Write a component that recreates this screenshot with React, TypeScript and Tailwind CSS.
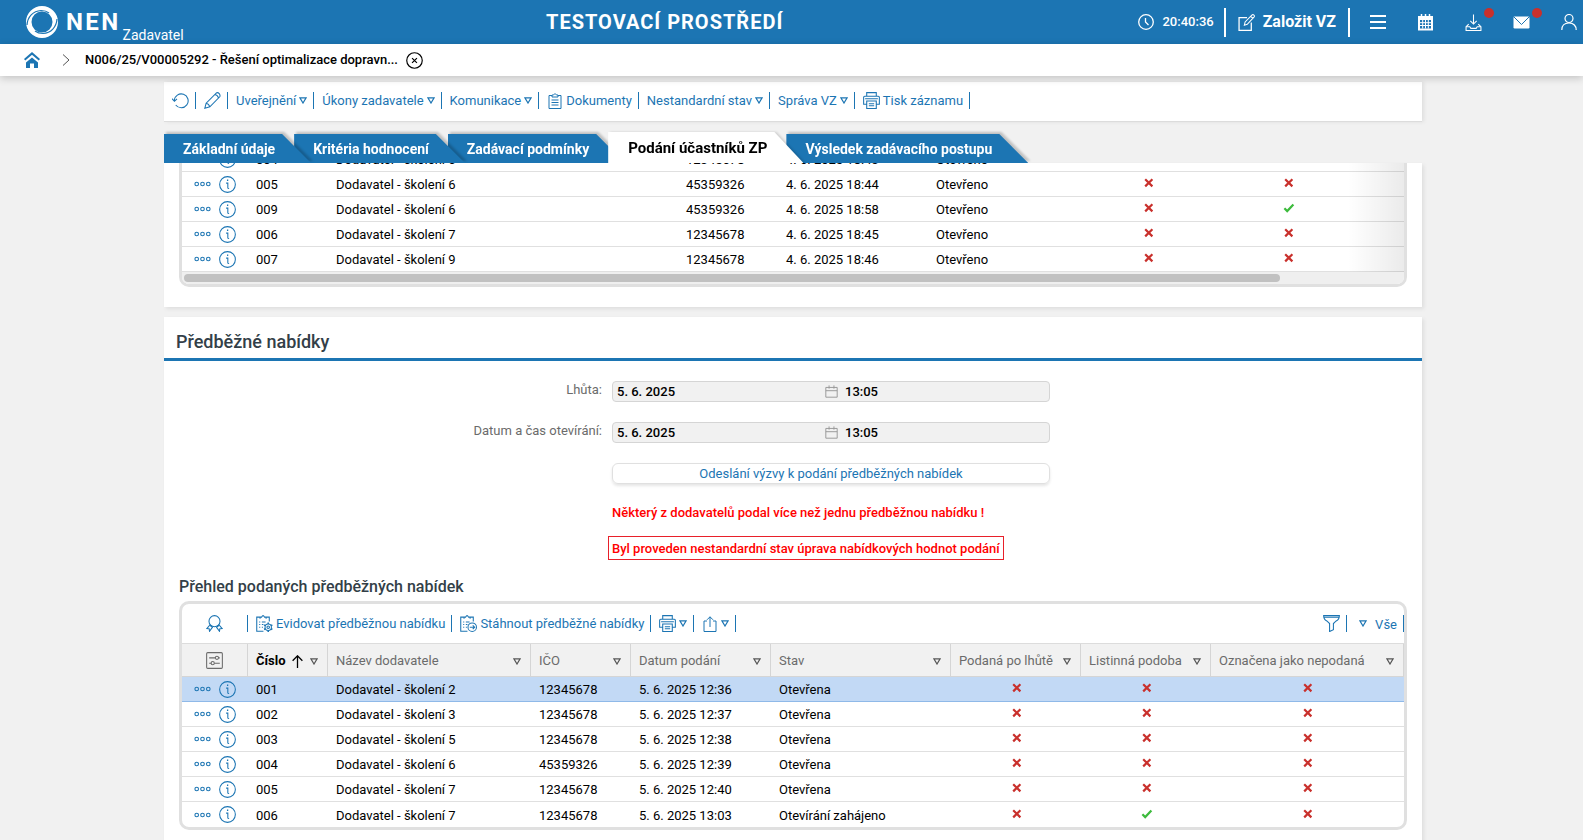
import { useState, type ReactNode } from "react";

interface IconProps {
  className?: string;
}

interface Submission {
  id: string;
  supplier: string;
  ico: string;
  date: string;
  state: string;
  flags: boolean[];
}

const tabs = [
  "Základní údaje",
  "Kritéria hodnocení",
  "Zadávací podmínky",
  "Podání účastníků ZP",
  "Výsledek zadávacího postupu",
];

const tabLayers = ["z-50", "z-40", "z-30", "z-20", "z-10"];

const requests: Submission[] = [
  { id: "004", supplier: "Dodavatel - školení 6", ico: "12345678", date: "4. 6. 2025 18:43", state: "Otevřeno", flags: [false, false] },
  { id: "005", supplier: "Dodavatel - školení 6", ico: "45359326", date: "4. 6. 2025 18:44", state: "Otevřeno", flags: [false, false] },
  { id: "009", supplier: "Dodavatel - školení 6", ico: "45359326", date: "4. 6. 2025 18:58", state: "Otevřeno", flags: [false, true] },
  { id: "006", supplier: "Dodavatel - školení 7", ico: "12345678", date: "4. 6. 2025 18:45", state: "Otevřeno", flags: [false, false] },
  { id: "007", supplier: "Dodavatel - školení 9", ico: "12345678", date: "4. 6. 2025 18:46", state: "Otevřeno", flags: [false, false] },
];

const offers: Submission[] = [
  { id: "001", supplier: "Dodavatel - školení 2", ico: "12345678", date: "5. 6. 2025 12:36", state: "Otevřena", flags: [false, false, false] },
  { id: "002", supplier: "Dodavatel - školení 3", ico: "12345678", date: "5. 6. 2025 12:37", state: "Otevřena", flags: [false, false, false] },
  { id: "003", supplier: "Dodavatel - školení 5", ico: "12345678", date: "5. 6. 2025 12:38", state: "Otevřena", flags: [false, false, false] },
  { id: "004", supplier: "Dodavatel - školení 6", ico: "45359326", date: "5. 6. 2025 12:39", state: "Otevřena", flags: [false, false, false] },
  { id: "005", supplier: "Dodavatel - školení 7", ico: "12345678", date: "5. 6. 2025 12:40", state: "Otevřena", flags: [false, false, false] },
  { id: "006", supplier: "Dodavatel - školení 7", ico: "12345678", date: "5. 6. 2025 13:03", state: "Otevírání zahájeno", flags: [false, true, false] },
];

const offerColumns = [
  "Název dodavatele",
  "IČO",
  "Datum podání",
  "Stav",
  "Podaná po lhůtě",
  "Listinná podoba",
  "Označena jako nepodaná",
];

/* ---------- icons ---------- */

function Svg({ className = "size-4", children }: { className?: string; children: ReactNode }) {
  return (
    <svg viewBox="0 0 16 16" fill="none" stroke="currentColor" strokeWidth="1" className={`shrink-0 ${className}`} aria-hidden="true">
      {children}
    </svg>
  );
}

function Arrow({ className = "" }: IconProps) {
  return (
    <svg viewBox="0 0 8 7" className={`h-[7px] w-2 shrink-0 ${className}`} fill="none" stroke="currentColor" strokeWidth="1.2" aria-hidden="true">
      <path d="M0.9 0.8h6.2L4 6z" />
    </svg>
  );
}

function Cross() {
  return (
    <svg viewBox="0 0 10 10" className="mx-auto size-[10px]" fill="none" stroke="#c9302c" strokeWidth="2.2" role="img" aria-label="Ne">
      <path d="M1.2 1.2l7.2 7.2M8.4 1.2L1.2 8.4" />
    </svg>
  );
}

function Check() {
  return (
    <svg viewBox="0 0 12 10" className="mx-auto h-[10px] w-3" fill="none" stroke="#3dbb3d" strokeWidth="2.2" role="img" aria-label="Ano">
      <path d="M1.4 5.2l2.8 2.9L10.4 1.6" />
    </svg>
  );
}

function LogoIcon() {
  return (
    <svg viewBox="0 0 32 32" className="size-8 shrink-0" aria-hidden="true">
      <path
        fill="#fff"
        fillRule="evenodd"
        d="M16 0a16 16 0 1 1 0 32 16 16 0 0 1 0-32zm0 5.500a10.500 10.500 0 1 0 0 21 10.500 10.500 0 0 0 0-21z"
      />
      <path
        d="M1 19C1.500 11 7 5 15 4.500q5 0 8 2.500M31 13c-.5 8-6 14-14 14.500q-5 0-8-2.500"
        fill="none"
        stroke="#1c75b3"
        strokeWidth="1.200"
      />
    </svg>
  );
}

const ClockIcon = () => (
  <Svg>
    <circle cx="8" cy="8" r="7.3" strokeWidth="1.300" />
    <path d="M7.500 4v4l3 3" strokeWidth="1.300" />
  </Svg>
);

const EditIcon = () => (
  <Svg className="size-[17px]">
    <path d="M8.500 3.500H1v12h11.500V8" strokeWidth="1.200" />
    <path d="M6 10.500l.7-3L13 1q1-.8 2 0t0 2L8.700 9.700zM12 2.200l2 2" />
  </Svg>
);

const CalendarSolidIcon = () => (
  <svg viewBox="0 0 17 17" className="size-[17px]" aria-hidden="true">
    <path d="M1 2h15v14.500H1z" fill="#fff" />
    <path d="M4.500 0v3.500M8.500 0v3.500M12.500 0v3.500" stroke="#fff" strokeWidth="1.500" />
    <path d="M3 6h11v8.500H3z" fill="#1c75b3" />
    <path d="M3 8.700h11M3 11.500h11M5.700 6v8.500M8.500 6v8.500M11.300 6v8.500" stroke="#fff" strokeWidth="1" />
  </svg>
);

const InboxIcon = () => (
  <Svg className="size-[17px]">
    <path d="M8 .5v9M5 6.500l3 3 3-3" />
    <path d="M3.500 9.500L1 12v3.500h14V12l-2.500-2.500" />
    <path d="M1 12h3.500l1 1.500h5l1-1.500H15" />
  </Svg>
);

const MailIcon = () => (
  <svg viewBox="0 0 17 13" className="h-[13px] w-[17px]" aria-hidden="true">
    <rect x=".5" y=".5" width="16" height="12" rx="1.200" fill="#fff" />
    <path d="M1 1l7.500 7.500L16 1" fill="none" stroke="#1c75b3" strokeWidth="1" />
  </svg>
);

const UserIcon = () => (
  <Svg>
    <circle cx="8" cy="4.500" r="4" strokeWidth="1.200" />
    <path d="M.8 16c0-4 2.500-7 7.200-7s7.200 3 7.200 7" strokeWidth="1.200" />
  </Svg>
);

const HomeIcon = () => (
  <svg viewBox="0 0 16 16" className="size-4" aria-hidden="true">
    <path d="M8 5.500l6 5V16h-4v-4.500H6V16H2v-5.500z" fill="#1c75b3" />
    <path d="M.6 7.800L8 1.400l7.400 6.400" fill="none" stroke="#1c75b3" strokeWidth="2" />
  </svg>
);

const RefreshIcon = () => (
  <Svg className="size-[17px]">
    <path d="M2.200 8a6.500 6.500 0 1 1 1.300 4.200M0 6.300l2.300 2.500 2.400-2.300" />
  </Svg>
);

const PencilIcon = () => (
  <Svg className="size-[17px]">
    <path d="M.8 15.200l1.200-4.700L11.500 1q1.500-1 2.800.6t.5 2.900L5.500 14zM2 10.500q2.500.5 3.500 3.500M10.300 2.300q2.500.4 3.300 3.300" />
  </Svg>
);

const ClipboardIcon = () => (
  <Svg>
    <path d="M5 2.500H2v13h12v-13h-3M5 4V2h1.500q1.500-3 3 0H11v2zM4.500 7h7M4.500 9.500h7M4.500 12h7" />
  </Svg>
);

// clipboard with a badge in the corner, used by the table actions
function ClipboardBadgeIcon({ kind }: { kind: "gear" | "arrow" }) {
  return (
    <Svg className="size-[17px]">
      <path d="M4 2H.7v13.300H7M9.500 2h3v4M3.800 3.500V2h1.500q1.300-2.800 2.700 0h1.500v1.500M3 6.500h1M5.500 6.500H9M3 9h1M5.500 9H7M3 11.500h1M5.500 11.500h1" />
      {kind === "gear" ? (
        <>
          <circle cx="11.500" cy="11.500" r="1.200" />
          <circle cx="11.500" cy="11.500" r="3" />
          <path d="M11.500 7v1.500M11.500 14.500V16M7.600 9.300l1.300.7M14.100 13l1.300.7M7.600 13.700l1.300-.7M14.100 10l1.300-.7" strokeWidth="1.500" />
        </>
      ) : (
        <>
          <circle cx="11.500" cy="11.500" r="4" />
          <path d="M9.200 11.500h4.500M12 9.700l1.800 1.800-1.800 1.800" />
        </>
      )}
    </Svg>
  );
}

const PrinterIcon = () => (
  <Svg className="size-[17px]">
    <path d="M3.500 4V.6h9V4M3.500 11.500H.6V5q0-1 1-1h12.800q1 0 1 1v6.500h-2.900M3.500 8.500h9v7h-9zM2 6.300h12M5.500 11h5M5.500 13h5" />
  </Svg>
);

const ShareIcon = () => (
  <Svg>
    <path d="M5 5H2v10.500h12V5h-3M8 11V.8M5 3.800l3-3 3 3" />
  </Svg>
);

const FunnelIcon = () => (
  <Svg className="size-[17px]">
    <path d="M.6.600h14.800q0 3.400-3 5L9.800 8v5.800L6.200 15.600V8L3.600 5.600q-3-1.600-3-5zM1 2.200h14" />
  </Svg>
);

const RibbonIcon = () => (
  <Svg className="size-[17px]">
    <circle cx="8" cy="5.800" r="5.200" />
    <path d="M3.800 9.200L.8 12.800l2.200.2.300 2.300L6 11.600q-1.500-.8-2.200-2.400M12.200 9.200l3 3.600-2.200.2-.3 2.300L10 11.600q1.500-.8 2.200-2.400" />
  </Svg>
);

const SettingsIcon = () => (
  <Svg className="size-[17px]">
    <rect x=".6" y=".6" width="14.800" height="14.800" rx="1" />
    <path d="M3 5.500h5.700M3 10.500h2M7.700 10.500H13" />
    <circle cx="10.300" cy="5.500" r="1.500" />
    <circle cx="6.300" cy="10.500" r="1.500" />
    <path d="M11.800 5.500H13" />
  </Svg>
);

const SmallCalendarIcon = () => (
  <Svg className="size-[13px] text-[#999]">
    <path d="M1 3h14v12H1zM1 7h14M5 .5v4M11 .5v4" strokeWidth="1.200" />
  </Svg>
);

const DotsIcon = () => (
  <svg viewBox="0 0 17 6" className="h-[6px] w-[17px]" fill="none" stroke="currentColor" strokeWidth="1.100" aria-hidden="true">
    <circle cx="2.700" cy="3" r="1.800" />
    <circle cx="8.500" cy="3" r="1.800" />
    <circle cx="14.300" cy="3" r="1.800" />
  </svg>
);

const InfoIcon = () => (
  <Svg className="size-[17px]">
    <circle cx="8" cy="8" r="7.400" />
    <path d="M6.700 6.700h1.600v4.500q0 .5 1.200.5" />
    <path d="M7.500 4h1.200" strokeWidth="1.300" />
  </Svg>
);

const CloseIcon = () => (
  <Svg className="size-[17px]">
    <circle cx="8" cy="8" r="7.300" strokeWidth="1.100" />
    <path d="M5.700 5.700l4.600 4.600M10.300 5.700l-4.600 4.600" strokeWidth="1.100" />
  </Svg>
);

/* ---------- parts ---------- */

interface ToolButtonProps {
  label?: string;
  title?: string;
  icon?: ReactNode;
  menu?: boolean;
}

function ToolButton({ label, title, icon, menu }: ToolButtonProps) {
  return (
    <button
      type="button"
      aria-label={label ?? title}
      className="flex h-[17px] items-center gap-[3px] border-r border-[#1c75b3] pr-[6px] pl-2 text-[#1c75b3]"
    >
      {icon}
      {label && <span>{label}</span>}
      {menu && <Arrow />}
    </button>
  );
}

function RowActions() {
  return (
    <td>
      <div className="flex items-center gap-2 pl-3 text-[#1c75b3]">
        <button type="button" aria-label="Akce">
          <DotsIcon />
        </button>
        <button type="button" aria-label="Detail">
          <InfoIcon />
        </button>
      </div>
    </td>
  );
}

function RowCells({ row }: { row: Submission }) {
  return (
    <>
      <RowActions />
      <td className="pt-0.5 pl-2">{row.id}</td>
      <td className="pt-0.5 pl-2">{row.supplier}</td>
      <td className="pt-0.5 pl-2">{row.ico}</td>
      <td className="pt-0.5 pl-2">{row.date}</td>
      <td className="pt-0.5 pl-2">{row.state}</td>
    </>
  );
}

function FlagCell({ value }: { value: boolean }) {
  return <td className="pb-0.5 pl-px">{value ? <Check /> : <Cross />}</td>;
}

function DateField({ id, label, date, time }: { id: string; label: string; date: string; time: string }) {
  return (
    <div className="flex items-center">
      <label htmlFor={id} className="w-[438px] pr-[10px] pb-1 text-right text-[#6b6b6b]">
        {label}
      </label>
      <div className="flex h-[21px] w-[438px] items-center rounded border border-[#d5d5d5] bg-[#f1f1f1] font-medium">
        <input id={id} readOnly defaultValue={date} className="w-[212px] pl-1 outline-none" />
        <SmallCalendarIcon />
        <input aria-label={`${label} čas`} readOnly defaultValue={time} className="w-[150px] pl-[7px] outline-none" />
      </div>
    </div>
  );
}

export default function App() {
  const [activeTab, setActiveTab] = useState(3);
  const [selected, setSelected] = useState("001");

  return (
    <div className="flex h-screen flex-col overflow-hidden bg-[#f1f1f1] font-['Roboto',sans-serif] text-[13px] leading-4 text-black">
      <header className="flex h-11 shrink-0 items-center bg-[#1c75b3] pr-[6px] pl-[26px] text-white">
        <a href="#" className="flex w-1/3 items-center self-stretch">
          <LogoIcon />
          <span className="pl-2 text-2xl font-bold tracking-widest">NEN</span>
          <span className="self-end pl-0.5 text-sm leading-[18px]">Zadavatel</span>
        </a>
        <h1 className="pl-[3px] text-xl font-bold tracking-wider">TESTOVACÍ PROSTŘEDÍ</h1>
        <div className="flex flex-1 items-center justify-end">
          <ClockIcon />
          <time className="pr-[10px] pl-2 font-medium">20:40:36</time>
          <button type="button" className="flex h-[29px] items-center gap-2 border-x-2 border-white px-3 text-base font-bold">
            <EditIcon />
            Založit VZ
          </button>
          <nav className="flex items-center gap-[31px] pl-5">
            <button type="button" aria-label="Menu">
              <svg viewBox="0 0 16 14" className="h-[14px] w-4" stroke="#fff" strokeWidth="2" aria-hidden="true">
                <path d="M0 1h16M0 7h16M0 13h16" />
              </svg>
            </button>
            <button type="button" aria-label="Kalendář">
              <CalendarSolidIcon />
            </button>
            <button type="button" aria-label="Stažené" className="relative">
              <InboxIcon />
              <span className="absolute -top-[6px] -right-3 size-[10px] rounded-full bg-[#c9302c]" />
            </button>
            <button type="button" aria-label="Zprávy" className="relative">
              <MailIcon />
              <span className="absolute -top-2 -right-3 size-[10px] rounded-full bg-[#c9302c]" />
            </button>
            <button type="button" aria-label="Uživatel">
              <UserIcon />
            </button>
          </nav>
        </div>
      </header>

      <nav className="z-10 flex h-8 shrink-0 items-center bg-white pl-6 shadow-[0_2px_8px_rgba(0,0,0,0.2)]">
        <a href="#" aria-label="Domů">
          <HomeIcon />
        </a>
        <svg viewBox="0 0 8 12" className="ml-[22px] h-3 w-2" fill="none" stroke="#555" aria-hidden="true">
          <path d="M1 .5l6 5.500-6 5.500" />
        </svg>
        <a href="#" className="pl-[15px] font-medium">
          N006/25/V00005292 - Řešení optimalizace dopravn...
        </a>
        <button type="button" aria-label="Zavřít" className="pl-2">
          <CloseIcon />
        </button>
      </nav>

      <main className="pt-[6px] pl-[3px]">
        <div className="mx-auto max-w-[1258px]">
          <div className="flex h-10 items-center border-b border-[#dcdcdc] bg-white pb-[2px] shadow-[2px_0_4px_rgba(0,0,0,0.08)]">
            <ToolButton title="Obnovit" icon={<RefreshIcon />} />
            <ToolButton title="Upravit" icon={<PencilIcon />} />
            <ToolButton label="Uveřejnění" menu />
            <ToolButton label="Úkony zadavatele" menu />
            <ToolButton label="Komunikace" menu />
            <ToolButton label="Dokumenty" icon={<ClipboardIcon />} />
            <ToolButton label="Nestandardní stav" menu />
            <ToolButton label="Správa VZ" menu />
            <ToolButton label="Tisk záznamu" icon={<PrinterIcon />} />
          </div>

          <ul className="flex h-[41px] items-end overflow-hidden text-sm font-bold">
            {tabs.map((tab, index) => (
              <li
                key={tab}
                className={`relative ${
                  activeTab === index
                    ? "z-60 drop-shadow-[2px_0_1px_rgba(0,0,0,0.15)]"
                    : `drop-shadow-[2px_-2px_1px_rgba(0,0,0,0.2)] ${tabLayers[index]}`
                }`}
              >
                <button
                  type="button"
                  onClick={() => setActiveTab(index)}
                  className={`-mr-[17px] block pr-9 whitespace-nowrap [clip-path:polygon(0_0,calc(100%_-_29px)_0,100%_100%,0_100%)] ${
                    activeTab === index ? "h-[31px] bg-white pt-0.5 pl-5 text-[15px] text-black" : "h-[29px] bg-[#1c75b3] pt-px pl-[19px] text-white"
                  }`}
                >
                  {tab}
                </button>
              </li>
            ))}
          </ul>

          <section className="h-36 overflow-hidden bg-white px-[15px] shadow-[2px_2px_4px_rgba(0,0,0,0.08)]">
            <div className="relative -mt-[19px] overflow-hidden rounded-[10px] border-[3px] border-[#e0e0e0]">
              <table className="w-full table-fixed border-separate border-spacing-0">
                <colgroup>
                  <col className="w-[66px]" />
                  <col className="w-20" />
                  <col className="w-[350px]" />
                  <col className="w-[100px]" />
                  <col className="w-[150px]" />
                  <col className="w-[150px]" />
                  <col className="w-[140px]" />
                  <col className="w-[140px]" />
                  <col />
                </colgroup>
                <tbody>
                  {requests.map((row) => (
                    <tr key={row.id} className="h-[25px] *:border-b *:border-[#e0e0e0]">
                      <RowCells row={row} />
                      {row.flags.map((flag, i) => (
                        <FlagCell key={i} value={flag} />
                      ))}
                      <td />
                    </tr>
                  ))}
                </tbody>
              </table>
              <div className="absolute top-0 right-0 bottom-3 w-14 bg-linear-to-r from-transparent to-black/8" />
              <div className="h-3 bg-[#efefef] px-0.5 pt-0.5">
                <div className="h-2 w-[90%] rounded-full bg-[#c1c1c1]" />
              </div>
            </div>
          </section>

          <section className="mt-[10px] h-[600px] bg-white shadow-[2px_2px_4px_rgba(0,0,0,0.08)]">
            <h2 className="h-11 border-b-[3px] border-[#1c75b3] pt-[13px] pl-3 text-lg leading-6 font-medium text-[#333f48]">
              Předběžné nabídky
            </h2>

            <form className="flex flex-col gap-5 pt-5 pl-[10px]">
              <DateField id="deadline" label="Lhůta:" date="5. 6. 2025" time="13:05" />
              <DateField id="opening" label="Datum a čas otevírání:" date="5. 6. 2025" time="13:05" />
              <button
                type="button"
                className="ml-[438px] h-[21px] w-[438px] rounded-md border border-[#e0e0e0] text-[#1c75b3] shadow-[0_2px_3px_rgba(0,0,0,0.1)]"
              >
                Odeslání výzvy k podání předběžných nabídek
              </button>
              <p className="ml-[438px] leading-[18px] font-medium text-[#f00]">
                Některý z dodavatelů podal více než jednu předběžnou nabídku !
              </p>
            </form>
            <p className="mt-[14px] ml-[444px] w-fit border border-[#e8202a] px-[3px] pt-1 pb-[2px] font-medium text-[#f00]">
              Byl proveden nestandardní stav úprava nabídkových hodnot podání
            </p>

            <h3 className="pt-[17px] pb-1 pl-[15px] text-base leading-5 font-medium text-[#333f48]">Přehled podaných předběžných nabídek</h3>

            <div className="mx-[15px] overflow-hidden rounded-[10px] border-[3px] border-[#e0e0e0]">
              <div className="flex h-10 items-center border-b border-[#dcdcdc]">
                <button
                  type="button"
                  aria-label="Certifikát"
                  className="flex h-[17px] w-[66px] items-center justify-center border-r border-[#1c75b3] text-[#1c75b3]"
                >
                  <RibbonIcon />
                </button>
                <ToolButton label="Evidovat předběžnou nabídku" icon={<ClipboardBadgeIcon kind="gear" />} />
                <ToolButton label="Stáhnout předběžné nabídky" icon={<ClipboardBadgeIcon kind="arrow" />} />
                <ToolButton title="Tisk" icon={<PrinterIcon />} menu />
                <ToolButton title="Export" icon={<ShareIcon />} menu />
                <div className="ml-auto flex">
                  <ToolButton title="Filtr" icon={<FunnelIcon />} />
                  <button type="button" className="flex h-[17px] items-center gap-2 border-r border-[#1c75b3] pr-[6px] pl-3 text-[#1c75b3]">
                    <Arrow />
                    <span className="pt-0.5">Vše</span>
                  </button>
                </div>
              </div>
              <table className="w-full table-fixed border-separate border-spacing-0">
                <colgroup>
                  <col className="w-[66px]" />
                  <col className="w-20" />
                  <col className="w-[203px]" />
                  <col className="w-[100px]" />
                  <col className="w-[140px]" />
                  <col className="w-[180px]" />
                  <col className="w-[130px]" />
                  <col className="w-[130px]" />
                  <col />
                </colgroup>
                <thead className="bg-[#f1f1f1] text-left text-[#6b6b6b]">
                  <tr className="h-[33px] *:border-r *:border-b *:border-[#d5d5d5]">
                    <th>
                      <button type="button" aria-label="Nastavení sloupců" className="mx-auto block">
                        <SettingsIcon />
                      </button>
                    </th>
                    <th className="pt-0.5 pr-[9px] pl-2 font-bold text-black">
                      <div className="flex items-center justify-between">
                        Číslo
                        <Svg className="size-[13px]">
                          <path d="M8 16V1M2 7l6-6 6 6" strokeWidth="1.600" />
                        </Svg>
                        <Arrow className="text-[#555]" />
                      </div>
                    </th>
                    {offerColumns.map((column) => (
                      <th key={column} className="pt-0.5 pr-[9px] pl-2 font-normal">
                        <div className="flex items-center justify-between">
                          {column}
                          <Arrow className="text-[#555]" />
                        </div>
                      </th>
                    ))}
                  </tr>
                </thead>
                <tbody>
                  {offers.map((row) => (
                    <tr
                      key={row.id}
                      onClick={() => setSelected(row.id)}
                      className={`h-[25px] *:border-b last:*:border-b-0 ${
                        selected === row.id ? "bg-[#c2d9f5] *:border-[#8fb9e8]" : "*:border-[#e0e0e0]"
                      }`}
                    >
                      <RowCells row={row} />
                      {row.flags.map((flag, i) => (
                        <FlagCell key={i} value={flag} />
                      ))}
                    </tr>
                  ))}
                </tbody>
              </table>
            </div>
          </section>
        </div>
      </main>
    </div>
  );
}
